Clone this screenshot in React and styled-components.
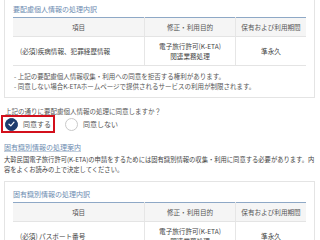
import styled, { createGlobalStyle } from "styled-components"

const Global = createGlobalStyle`
  body {
    margin: 0;
    background: #fff;
    font-family: "Noto Sans CJK JP", "Noto Sans", sans-serif;
    color: #444;
  }
`;

const Page = styled.div`
  width: 320px;
  height: 240px;
  overflow: hidden;
  padding: 0 5px 0 4px;
  box-sizing: border-box;
`;

const Card = styled.div`
  border: 1px solid #e4e4e4;
  border-top: ${p => (p.$cut ? "none" : "1px solid #e4e4e4")};
  padding: ${p => (p.$cut ? "3px" : "6px")} 8px 6px 8px;
  margin-top: ${p => p.$top || 0}px;
`;

const CardTitle = styled.div`
  font-size: 7px;
  line-height: 12px;
  color: #6d8cb1;
  margin-bottom: 2px;
`;

const Table = styled.table`
  width: 100%;
  border-collapse: collapse;
  border-top: 1px solid #8ea8c6;
  font-size: 6.6px;
  line-height: 10px;
`;

const Th = styled.th`
  font-weight: normal;
  background: #f5f5f5;
  padding: 4px 4px;
  color: #555;
  border-bottom: 1px solid #e4e4e4;
  border-left: ${p => (p.$first ? "none" : "1px solid #e6e6e6")};
  width: ${p => p.$w}px;
`;

const Td = styled.td`
  padding: 4px 7px;
  text-align: ${p => p.$align || "center"};
  border-bottom: 1px solid #e4e4e4;
  border-left: ${p => (p.$first ? "none" : "1px solid #e6e6e6")};
  color: #444;
`;

const Notes = styled.ul`
  list-style: none;
  margin: 5px 0 0 0;
  padding: 0 0 0 1px;
  font-size: 6.5px;
  line-height: 10px;
  color: #555;
`;

const Question = styled.div`
  font-size: 6.5px;
  line-height: 10px;
  margin-top: 8px;
  padding-left: 1px;
  color: #555;
`;

const RadioRow = styled.div`
  display: flex;
  align-items: center;
  gap: 6px;
  margin: -1px 0 0 -3px;
`;

const Choice = styled.label`
  display: flex;
  align-items: center;
  gap: 5px;
  font-size: 7px;
  line-height: 12px;
  color: #555;
  padding: 1px 2px 1px 2px;
  height: 12px;
  border: 2px solid ${p => (p.$selected ? "#d3101c" : "transparent")};
`;

const Dot = styled.span`
  width: 13px;
  height: 13px;
  border-radius: 50%;
  box-sizing: border-box;
  display: flex;
  align-items: center;
  justify-content: center;
  background: ${p => (p.$on ? "#1e3c6e" : "#fff")};
  border: 1px solid ${p => (p.$on ? "#1e3c6e" : "#c9c9c9")};
`;

const GuideLink = styled.a`
  display: block;
  margin-top: 8px;
  font-size: 7px;
  line-height: 12px;
  color: #6d8cb1;
  text-decoration: underline;
  text-decoration-color: #c3cfdd;
`;

const Para = styled.p`
  margin: 2px 0 0 0;
  font-size: 6.3px;
  line-height: 10px;
  color: #444;
`;

const rows = {
  sensitive: "(必須)疾病情報、犯罪経歴情報",
  unique: "(必須) パスポート番号",
};

const InfoTable = ({ item }) => (
  <Table>
    <thead>
      <tr>
        <Th $first $w={123}>項目</Th>
        <Th $w={82}>修正・利用目的</Th>
        <Th>保有および利用期間</Th>
      </tr>
    </thead>
    <tbody>
      <tr>
        <Td $first $align="left">{item}</Td>
        <Td>電子旅行許可(K-ETA)<br />関連業務処理</Td>
        <Td>準永久</Td>
      </tr>
    </tbody>
  </Table>
);

const Check = () => (
  <svg width="7" height="6" viewBox="0 0 7 6">
    <path d="M1 3.2 L2.8 4.8 L6 1.2" stroke="#fff" strokeWidth="1.2" fill="none" strokeLinecap="round" strokeLinejoin="round" />
  </svg>
);

const App = () => {
  return (
    <Page>
      <Global />
      <Card $cut>
        <CardTitle>要配慮個人情報の処理内訳</CardTitle>
        <InfoTable item={rows.sensitive} />
        <Notes>
          <li>- 上記の要配慮個人情報収集・利用への同意を拒否する権利があります。</li>
          <li>- 同意しない場合K-ETAホームページで提供されるサービスの利用が制限されます。</li>
        </Notes>
      </Card>
      <Question>上記の通りに要配慮個人情報の処理に同意しますか？</Question>
      <RadioRow>
        <Choice $selected>
          <Dot $on><Check /></Dot>
          同意する
        </Choice>
        <Choice>
          <Dot />
          同意しない
        </Choice>
      </RadioRow>
      <GuideLink>固有識別情報の処理案内</GuideLink>
      <Para>
        大韓民国電子旅行許可(K-ETA)の申請をするためには固有識別情報の収集・利用に同意する必要があります。内容をよくお読みの上で決定してください。
      </Para>
      <Card $top={6}>
        <CardTitle>固有識別情報の処理内訳</CardTitle>
        <InfoTable item={rows.unique} />
      </Card>
    </Page>
  )
}

export default App
